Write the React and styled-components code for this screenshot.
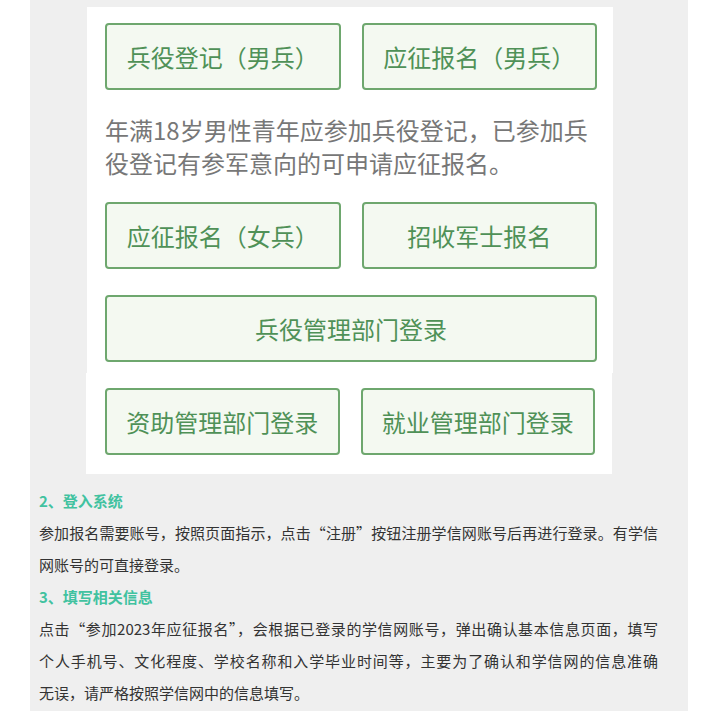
import React from 'react';
import styled, { createGlobalStyle } from 'styled-components';

const GlobalStyle = createGlobalStyle`
  body {
    margin: 0;
    background: #ffffff;
    font-family: "Noto Sans CJK SC", "Noto Sans", sans-serif;
  }
`;

const Page = styled.div`
  margin-left: 30px;
  width: 658px;
  min-height: 711px;
  padding-top: 7px;
  box-sizing: border-box;
  background: #efefef;
`;

const Figure = styled.div`
  margin-left: ${(props) => props.$offset}px;
  width: 526px;
  box-sizing: border-box;
  background: #ffffff;
  padding: ${(props) => props.$pad};
`;

const ButtonGrid = styled.div`
  display: grid;
  grid-template-columns: 1fr 1fr;
  column-gap: 21px;
  row-gap: 26px;
`;

const LinkButton = styled.div`
  grid-column: ${(props) => (props.$wide ? '1 / span 2' : 'auto')};
  height: 67px;
  box-sizing: border-box;
  display: flex;
  align-items: center;
  justify-content: center;
  border: 2px solid #6ea76e;
  border-radius: 4px;
  background: #f4f9f1;
  color: #4f9157;
  font-size: 24px;
  line-height: 1;
`;

const Intro = styled.p`
  margin: 23px 0;
  color: #777777;
  font-size: 24px;
  line-height: 33px;
`;

const Article = styled.div`
  padding: 11px 30px 0 9px;
  color: #333333;
  font-size: 15px;
  line-height: 32px;
`;

const Heading = styled.div`
  color: #41c2a0;
  font-weight: 700;
`;

const Paragraph = styled.div`
  margin: 0;
`;

const Line = styled.span`
  display: block;
  white-space: nowrap;
  text-align: justify;
  text-align-last: ${(props) => (props.$last ? 'left' : 'justify')};
`;

export default function App() {
  return (
    <>
      <GlobalStyle />
      <Page>
        <Figure $offset={57} $pad="16px 16px 11px 18px">
          <ButtonGrid>
            <LinkButton>兵役登记（男兵）</LinkButton>
            <LinkButton>应征报名（男兵）</LinkButton>
          </ButtonGrid>
          <Intro>年满18岁男性青年应参加兵役登记，已参加兵役登记有参军意向的可申请应征报名。</Intro>
          <ButtonGrid>
            <LinkButton>应征报名（女兵）</LinkButton>
            <LinkButton>招收军士报名</LinkButton>
            <LinkButton $wide>兵役管理部门登录</LinkButton>
          </ButtonGrid>
        </Figure>
        <Figure $offset={56} $pad="15px 17px 19px 19px">
          <ButtonGrid>
            <LinkButton>资助管理部门登录</LinkButton>
            <LinkButton>就业管理部门登录</LinkButton>
          </ButtonGrid>
        </Figure>
        <Article>
          <Heading>2、登入系统</Heading>
          <Paragraph>
            <Line>参加报名需要账号，按照页面指示，点击“注册”按钮注册学信网账号后再进行登录。有学信</Line>
            <Line $last>网账号的可直接登录。</Line>
          </Paragraph>
          <Heading>3、填写相关信息</Heading>
          <Paragraph>
            <Line>点击“参加2023年应征报名”，会根据已登录的学信网账号，弹出确认基本信息页面，填写</Line>
            <Line>个人手机号、文化程度、学校名称和入学毕业时间等，主要为了确认和学信网的信息准确</Line>
            <Line $last>无误，请严格按照学信网中的信息填写。</Line>
          </Paragraph>
        </Article>
      </Page>
    </>
  );
}
